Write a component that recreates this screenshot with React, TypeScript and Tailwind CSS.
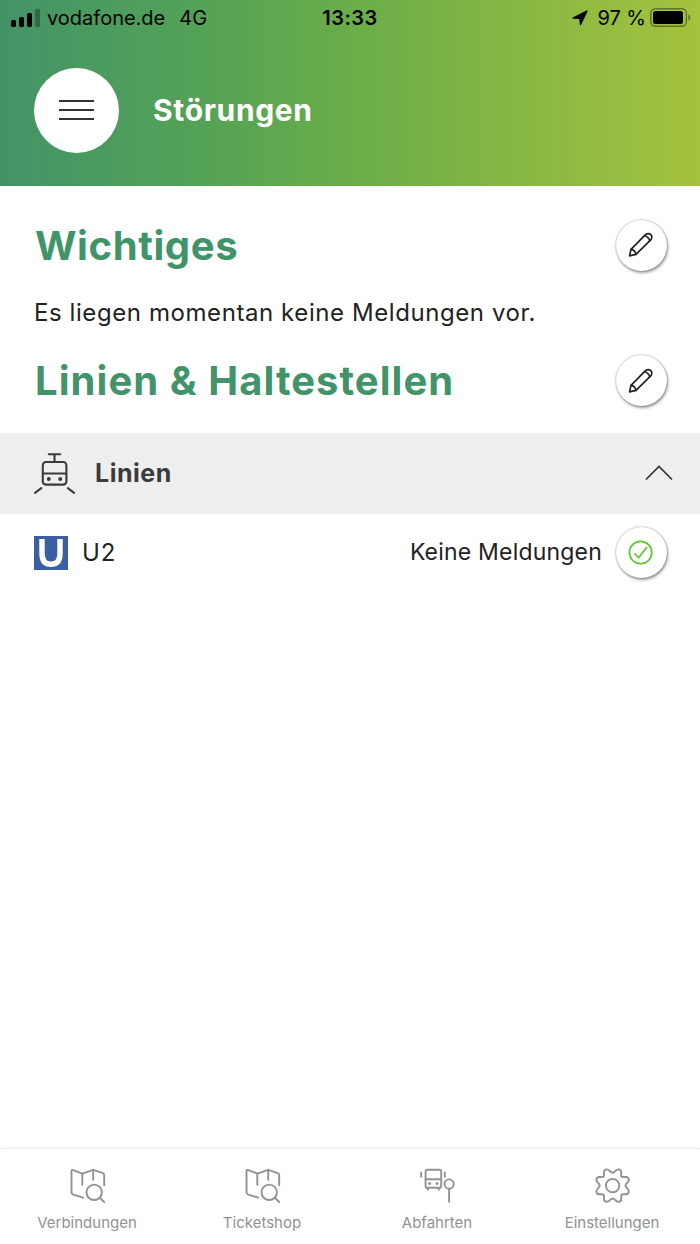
import type { ReactNode } from 'react'

function PencilIcon() {
  return (
    <svg width="26" height="26" viewBox="0 0 26 26" fill="none" stroke="#222" strokeWidth="1.7" strokeLinejoin="round" strokeLinecap="round">
      <path d="M1.6 23.8 L3 17.4 L17 3.2 C19 1.2 21.2 1 22.8 2.6 C24.4 4.2 24.2 6.4 22.2 8.4 L8 22.4 Z" />
      <path d="M3 17.4 Q7.2 18 8 22.4 M16.6 3.8 Q20.4 4.8 21.8 8.8" />
    </svg>
  )
}

function CheckIcon() {
  return (
    <svg width="26" height="26" viewBox="0 0 26 26" fill="none" stroke="#54c62d" strokeWidth="1.6" strokeLinecap="round" strokeLinejoin="round">
      <circle cx="12.6" cy="12.6" r="11.2" />
      <path d="M6.8 13.8 L10.6 17.8 L18.6 7.6" />
    </svg>
  )
}

function TramIcon() {
  return (
    <svg width="42" height="42" viewBox="0 0 42 42" fill="none" stroke="#3b3b3b" strokeWidth="2.1" strokeLinecap="round">
      <path d="M15.8 1.2 H27.2 M21.5 1.2 V9" />
      <rect x="9.8" y="9" width="23.6" height="22.6" rx="3.2" />
      <path d="M10 20.5 H33 M2 39.8 L8.3 35.2 M34.9 35.2 L41 39.8" />
      <circle cx="15.8" cy="26" r="2" fill="#3b3b3b" stroke="none" />
      <circle cx="27.2" cy="26" r="2" fill="#3b3b3b" stroke="none" />
    </svg>
  )
}

function MapSearchIcon() {
  return (
    <svg width="36" height="36" viewBox="0 0 36 36" fill="none" stroke="#929292" strokeWidth="1.9" strokeLinecap="round" strokeLinejoin="round">
      <path d="M13 29.6 L2.8 26.3 Q1.5 25.8 1.5 24.6 V3.4 Q1.5 1.5 3.3 2.1 L12.3 5.6 L23.2 1.8 L32.8 5.2 Q34.2 5.7 34.2 7.2 V17.3" />
      <path d="M12.3 5.6 V16.8 M23.2 1.8 V11.8" />
      <circle cx="24.2" cy="24.3" r="7.7" />
      <path d="M29.8 29.8 L34.2 34" />
    </svg>
  )
}

function BusStopIcon() {
  return (
    <svg width="36" height="36" viewBox="0 0 36 36" fill="none" stroke="#929292" strokeWidth="1.9" strokeLinecap="round" strokeLinejoin="round">
      <rect x="5.6" y="1.8" width="15.6" height="18" rx="1.6" />
      <path d="M5.6 11.3 H21.2 M7.8 20.3 V21.8 M18.8 20.3 V21.8 M1.2 4.5 V8.7 M24.8 4.5 V8.7 M29.1 20.7 V33.8" />
      <circle cx="29.1" cy="16" r="4.6" />
      <circle cx="9.7" cy="15.5" r="1.5" fill="#929292" stroke="none" />
      <circle cx="17" cy="15.5" r="1.5" fill="#929292" stroke="none" />
    </svg>
  )
}

function GearIcon() {
  return (
    <svg width="36" height="36" viewBox="-17.6 -17.6 36 36" fill="none" stroke="#929292" strokeWidth="1.9" strokeLinecap="round">
      {[0, 90, 180, 270].map(deg => (
        <path
          key={deg}
          transform={`rotate(${deg})`}
          d="M0 -13 C2.8 -13 2.8 -16.2 5.6 -16.2 C7.7 -16.2 8.6 -15.2 8.6 -13.3 V-10.4 Q8.6 -8.6 10.4 -8.6 H13.3 C15.2 -8.6 16.2 -7.7 16.2 -5.6 C16.2 -2.8 13 -2.8 13 0"
        />
      ))}
      <circle r="6.7" />
    </svg>
  )
}

function RoundButton({ label, children }: { label: string; children: ReactNode }) {
  return (
    <button
      aria-label={label}
      className="flex size-[51px] items-center justify-center rounded-full bg-white shadow-[0_0_2px_rgba(0,0,0,0.4),1px_2px_3px_rgba(0,0,0,0.38)]"
    >
      {children}
    </button>
  )
}

function StatusBar() {
  return (
    <div className="grid h-9 grid-cols-3 items-center text-[20px] leading-none text-black">
      <div className="flex items-center pl-[11px]">
        <div className="flex h-[18px] items-end gap-[3px]">
          <span className="h-[7px] w-[5px] rounded-[1.5px] bg-black" />
          <span className="h-[10px] w-[5px] rounded-[1.5px] bg-black" />
          <span className="h-[14px] w-[5px] rounded-[1.5px] bg-black" />
          <span className="h-[18px] w-[5px] rounded-[1.5px] bg-black/30" />
        </div>
        <span className="ml-[7px]">vodafone.de</span>
        <span className="ml-[14px]">4G</span>
      </div>
      <div className="text-center font-semibold tracking-[0.5px]">13:33</div>
      <div className="flex items-center justify-end pr-[9px]">
        <svg width="16" height="16" viewBox="0 0 16 16" className="mr-[9px]">
          <path d="M0.7 7.4 L14.6 0.4 Q16 0 15.5 1.4 L9 15 Q8.2 16 7.8 14.6 L7.3 8.9 L1 8.7 Q-0.2 8.1 0.7 7.4 Z" />
        </svg>
        <span>97 %</span>
        <svg width="41" height="19" viewBox="0 0 41 19" className="mb-px ml-[4px]">
          <rect x="0.8" y="0.8" width="35.6" height="17.4" rx="4.5" fill="none" stroke="#000" strokeOpacity="0.4" strokeWidth="1.4" />
          <rect x="3" y="3" width="30" height="13" rx="2.5" />
          <path d="M38.3 6.3 Q40.4 7.2 40.4 9.5 T38.3 12.7 Z" fillOpacity="0.4" />
        </svg>
      </div>
    </div>
  )
}

const tabs = [
  { label: 'Verbindungen', icon: <MapSearchIcon /> },
  { label: 'Ticketshop', icon: <MapSearchIcon /> },
  { label: 'Abfahrten', icon: <BusStopIcon /> },
  { label: 'Einstellungen', icon: <GearIcon /> },
]

export default function App() {
  return (
    <div className="flex h-[1244px] w-[700px] flex-col overflow-hidden bg-white font-['Inter',sans-serif] text-[#222]">
      {/* Header */}
      <header className="h-[186px] bg-[linear-gradient(90deg,#439368_0%,#55a355_30%,#6aad49_50%,#a5c23e_100%)]">
        <StatusBar />
        <div className="flex items-center gap-[34px] pt-[31.5px] pl-[34px]">
          <button aria-label="Menü" className="flex size-[85px] flex-col items-center justify-center gap-[7px] rounded-full bg-white">
            <span className="h-[2px] w-[35px] bg-[#333]" />
            <span className="h-[2px] w-[35px] bg-[#333]" />
            <span className="h-[2px] w-[35px] bg-[#333]" />
          </button>
          <h1 className="text-[30px] font-bold tracking-[0.65px] text-white">Störungen</h1>
        </div>
      </header>

      {/* Messages */}
      <main className="flex-1">
        <div className="flex h-[118px] items-center justify-between pr-[33.5px] pl-[35px]">
          <h2 className="pt-px text-[40px] font-bold tracking-[0.6px] text-[#41946a]">Wichtiges</h2>
          <RoundButton label="Wichtiges bearbeiten"><PencilIcon /></RoundButton>
        </div>
        <p className="h-[17px] pl-[34px] text-[24px] leading-[17px] tracking-[0.58px]">Es liegen momentan keine Meldungen vor.</p>
        <div className="flex h-[112px] items-center justify-between pt-[7px] pr-[33.5px] pl-[35px]">
          <h2 className="pt-px text-[40px] font-bold tracking-[1.05px] text-[#41946a]">Linien &amp; Haltestellen</h2>
          <RoundButton label="Linien bearbeiten"><PencilIcon /></RoundButton>
        </div>

        <div className="flex h-[81px] items-center bg-[#eee] pr-[27px] pl-[33px]">
          <TramIcon />
          <h3 className="ml-5 flex-1 text-[25px] font-bold tracking-[0.5px] text-[#3b3b3b]">Linien</h3>
          <svg width="28" height="16" viewBox="0 0 28 16" fill="none" stroke="#333" strokeWidth="1.7" className="mb-[2px]">
            <path d="M1 14.5 L14 1.5 L27 14.5" />
          </svg>
        </div>

        <div className="flex h-[77px] items-center pr-[33.5px] pl-[34px]">
          <svg width="34" height="34" viewBox="0 0 34 34" fill="none">
            <rect width="34" height="34" fill="#3a5fa3" />
            <path d="M8 3 V17.5 C8 24.5 11 28.3 17 28.3 C23 28.3 26 24.5 26 17.5 V3" stroke="#fff" strokeWidth="5.4" />
          </svg>
          <span className="ml-[14px] flex-1 text-[24px] tracking-[0.8px]">U2</span>
          <span className="mr-[13.5px] text-[23px] tracking-[0.2px]">Keine Meldungen</span>
          <RoundButton label="Keine Meldungen"><CheckIcon /></RoundButton>
        </div>
      </main>

      {/* Tab bar */}
      <nav className="grid h-[96px] grid-cols-4 border-t border-[#ededed] shadow-[0_-1px_3px_rgba(0,0,0,0.05)]">
        {tabs.map(tab => (
          <div key={tab.label} className="flex flex-col items-center pt-[19px]">
            {tab.icon}
            <span className="mt-[9px] pr-px text-[15px] leading-5 text-[#929292]">{tab.label}</span>
          </div>
        ))}
      </nav>
    </div>
  )
}
